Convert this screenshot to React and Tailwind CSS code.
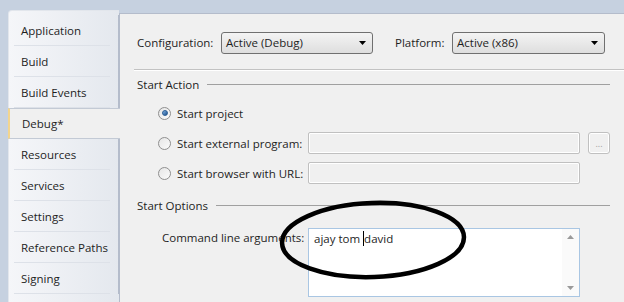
import React from "react";

const tabs = [
  "Application",
  "Build",
  "Build Events",
  "Debug*",
  "Resources",
  "Services",
  "Settings",
  "Reference Paths",
  "Signing",
];

const Radio = ({ checked }) => (
  <span className="w-[13px] h-[13px] rounded-full border border-[#8f8f8f] bg-gradient-to-br from-[#e6e6e6] to-[#fbfbfb] flex items-center justify-center shrink-0">
    {checked && (
      <span className="w-[6px] h-[6px] rounded-full bg-gradient-to-br from-[#7fb3e6] to-[#1a4f8a] border border-[#2b5d94]" />
    )}
  </span>
);

const Dropdown = ({ value, width }) => (
  <div
    className={`${width} h-[22px] border border-[#707070] rounded-[3px] bg-gradient-to-b from-[#f4f4f4] to-[#dedede] flex items-center justify-between pl-[4px] pr-[6px]`}
  >
    <span>{value}</span>
    <svg width="7" height="4" viewBox="0 0 7 4">
      <path d="M0 0H7L3.5 4Z" fill="#000" />
    </svg>
  </div>
);

const SectionTitle = ({ label }) => (
  <div className="flex items-center gap-[8px] mr-[14px]">
    <span>{label}</span>
    <div className="flex-1 h-px bg-[#a0a0a0]" />
  </div>
);

const App = () => {
  return (
    <div
      className="w-[624px] h-[302px] bg-[#c6d1e0] flex pt-[10px] pl-[8px] overflow-hidden relative text-[11.5px] text-[#1e1e1e] whitespace-nowrap"
      style={{ fontFamily: '"Open Sans", "Noto Sans", sans-serif' }}
    >
      {/* Tabs */}
      <div className="w-[111px] flex flex-col pt-[4px] bg-gradient-to-r from-[#f5f6f9] to-[#e4e8ee] rounded-tl-[4px] border-t border-l border-[#e2e6ec] z-10">
        {tabs.map((t) =>
          t === "Debug*" ? (
            <div
              key={t}
              className="h-[31px] flex items-center pl-[12px] -ml-px -mr-px bg-[#f0f0f0] border-l-2 border-[#f3d58e] border-y border-y-[#c3cad5]"
            >
              {t}
            </div>
          ) : (
            <div
              key={t}
              className="h-[31px] flex items-center pl-[12px] border-r border-[#b4bccb] relative"
            >
              {t}
              <div className="absolute left-[5px] right-[8px] bottom-0 h-px bg-[#dde1e8]" />
            </div>
          )
        )}
      </div>

      {/* Content */}
      <div className="flex-1 mt-[3px] bg-[#f0f0f0] border-t border-l border-[#b4bccb] flex flex-col">
        <div className="flex items-center pt-[18px] pl-[17px]">
          <span className="w-[84px]">Configuration:</span>
          <Dropdown value="Active (Debug)" width="w-[152px]" />
          <span className="ml-[22px] w-[57px]">Platform:</span>
          <Dropdown value="Active (x86)" width="w-[153px]" />
        </div>

        <div className="ml-[14px] mt-[15px] h-[2px] bg-[#c2c2c2] border-b border-white" />

        <div className="pl-[17px] mt-[5px] flex flex-col">
          <SectionTitle label="Start Action" />

          <div className="flex flex-col pl-[21px] mt-[9px] gap-[8px]">
            <div className="flex items-center h-[22px] gap-[6px]">
              <Radio checked />
              <span>Start project</span>
            </div>
            <div className="flex items-center h-[22px]">
              <Radio />
              <span className="ml-[6px] w-[131px]">Start external program:</span>
              <div className="w-[272px] h-[22px] border border-[#c0c0c0] rounded-[2px] shadow-[inset_0_0_0_1px_#ffffff]" />
              <div className="ml-[8px] w-[22px] h-[22px] border border-[#c0c0c0] rounded-[3px] shadow-[inset_0_0_0_1px_#ffffff] flex items-center justify-center text-[#a0a0a0] text-[9px] leading-none">
                ...
              </div>
            </div>
            <div className="flex items-center h-[22px]">
              <Radio />
              <span className="ml-[6px] w-[131px]">Start browser with URL:</span>
              <div className="w-[272px] h-[22px] border border-[#c0c0c0] rounded-[2px] shadow-[inset_0_0_0_1px_#ffffff]" />
            </div>
          </div>

          <div className="mt-[13px]">
            <SectionTitle label="Start Options" />
          </div>

          <div className="flex items-start pl-[25px] mt-[13px]">
            <span className="w-[146px] mt-[1px]">Command line arguments:</span>
            <div className="w-[272px] h-[69px] border border-[#a9c6e3] bg-white flex">
              <div className="flex-1 pl-[5px] pt-[1px]">
                ajay tom <span className="border-l border-black" />david
              </div>
              <div className="w-[17px] flex flex-col justify-between items-center py-[6px] bg-[#fafafa]">
                <svg width="7" height="4" viewBox="0 0 7 4">
                  <path d="M0 4H7L3.5 0Z" fill="#9a9a9a" />
                </svg>
                <svg width="7" height="4" viewBox="0 0 7 4">
                  <path d="M0 0H7L3.5 4Z" fill="#9a9a9a" />
                </svg>
              </div>
            </div>
          </div>
        </div>
      </div>

      {/* Hand-drawn annotation */}
      <svg
        className="absolute left-[276px] top-[198px] pointer-events-none"
        width="194"
        height="86"
        viewBox="0 0 194 86"
      >
        <ellipse
          cx="97"
          cy="42"
          rx="91"
          ry="37"
          fill="none"
          stroke="#000"
          strokeWidth="4.5"
          transform="rotate(-2 97 42)"
        />
      </svg>
    </div>
  );
};

export default App;
